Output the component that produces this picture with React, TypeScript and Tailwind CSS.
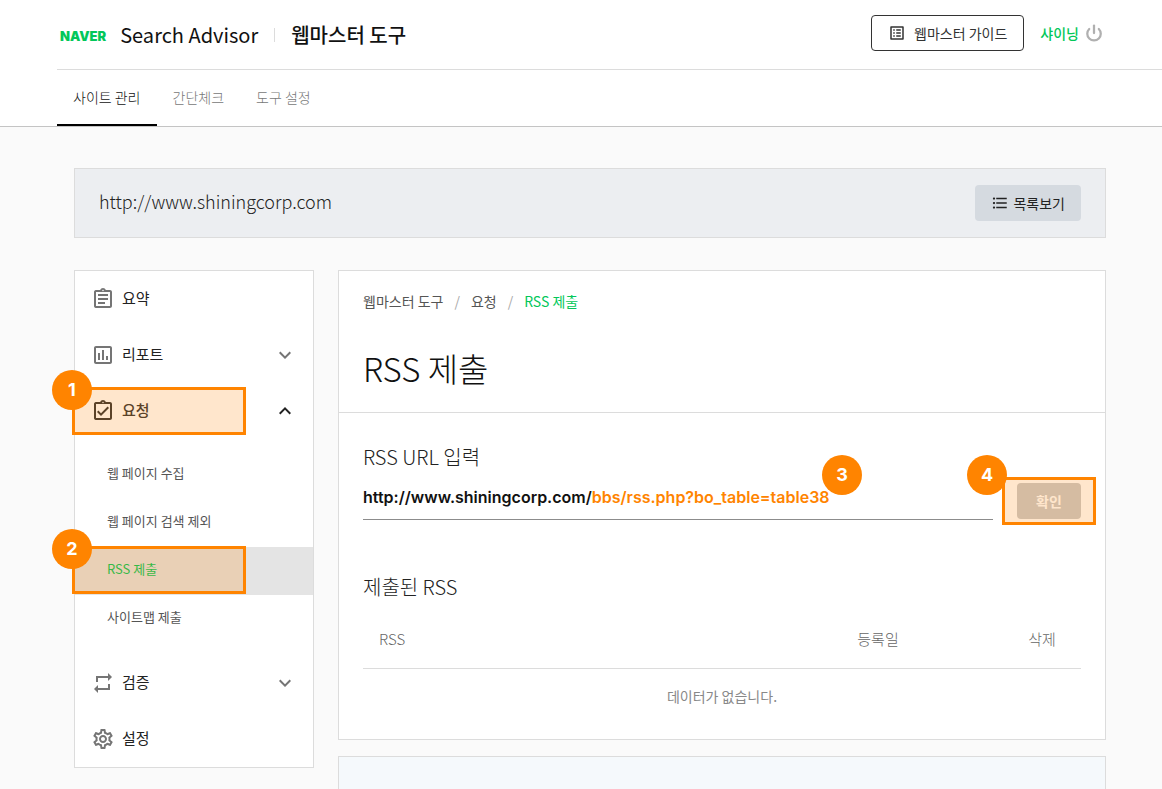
import { useState } from "react";
import { Power } from "lucide-react";
import type { IconType } from "react-icons";
import {
  MdExpandLess,
  MdExpandMore,
  MdFormatListBulleted,
  MdOutlineAssessment,
  MdOutlineAssignment,
  MdOutlineAssignmentTurnedIn,
  MdOutlineListAlt,
  MdOutlineSettings,
  MdRepeat,
} from "react-icons/md";

const card = "border border-[#dcdcdc] bg-white";

const TABS = ["사이트 관리", "간단체크", "도구 설정"];

type MenuItem = {
  label: string;
  icon: IconType;
  expandable?: boolean;
  step?: number;
  children?: { label: string; step?: number }[];
};

const MENU: MenuItem[] = [
  { label: "요약", icon: MdOutlineAssignment },
  { label: "리포트", icon: MdOutlineAssessment, expandable: true },
  {
    label: "요청",
    icon: MdOutlineAssignmentTurnedIn,
    expandable: true,
    step: 1,
    children: [
      { label: "웹 페이지 수집" },
      { label: "웹 페이지 검색 제외" },
      { label: "RSS 제출", step: 2 },
      { label: "사이트맵 제출" },
    ],
  },
  { label: "검증", icon: MdRepeat, expandable: true },
  { label: "설정", icon: MdOutlineSettings },
];

const StepBadge = ({ step, className }: { step: number; className: string }) => (
  <span
    className={
      "pointer-events-none absolute z-10 flex size-10 items-center justify-center rounded-full bg-[#ff8400] font-[Inter,sans-serif] text-lg font-bold text-white " +
      className
    }
  >
    {step}
  </span>
);

// orange frame laid over the control a step points at
const StepFrame = ({ className }: { className: string }) => (
  <span
    className={
      "pointer-events-none absolute h-12 border-3 border-[#ff8400] bg-[#ff8400]/20 " +
      className
    }
  />
);

const Header = () => (
  <header className="border-b border-[#c4c4c4] bg-white pl-[57px]">
    <div className="flex h-[70px] items-center justify-between border-b border-[#dcdcdc] pr-[59px]">
      <div className="flex items-center pl-[3px] text-xl font-medium text-[#111]">
        <span className="mt-1 font-[Inter,sans-serif] text-[13px] font-black text-[#03c75a]">
          NAVER
        </span>
        <a href="#" className="ml-3.5 font-normal">
          Search Advisor
        </a>
        <span className="mx-4 h-3.5 w-px bg-[#dcdcdc]" />
        <a href="#">웹마스터 도구</a>
      </div>
      <div className="mb-1 flex items-center">
        <a
          href="#"
          className="flex h-9 items-center gap-2 rounded border border-[#333] px-4 text-sm text-[#333]"
        >
          <MdOutlineListAlt className="size-[18px]" />
          웹마스터 가이드
        </a>
        <span className="ml-4 text-sm font-medium text-[#03c75a]">샤이닝</span>
        <button type="button" aria-label="로그아웃" className="ml-1.5">
          <Power className="size-[18px] text-[#b0b0b0]" strokeWidth={3} />
        </button>
      </div>
    </div>
    <nav className="flex h-14">
      {TABS.map((tab, i) => (
        <a
          key={tab}
          href="#"
          className={
            "flex items-center border-b-2 px-4 text-sm font-light " +
            (i === 0
              ? "border-black text-[#111]"
              : "border-transparent text-[#777]")
          }
        >
          {tab}
        </a>
      ))}
    </nav>
  </header>
);

const Sidebar = () => (
  <aside className={card + " w-60 shrink-0 self-start"}>
    <ul>
      {MENU.map(({ label, icon: Icon, expandable, step, children }) => (
        <li key={label}>
          <div className="relative">
            <button
              type="button"
              className={
                "flex h-14 w-full items-center px-4 text-[15px] " +
                (children ? "font-medium text-[#333]" : "text-[#222]")
              }
            >
              <Icon
                className={
                  "mr-[7px] size-6 " +
                  (children ? "text-[#333]" : "text-[#757575]")
                }
              />
              <span className="pb-0.5">{label}</span>
              {expandable &&
                (children ? (
                  <MdExpandLess className="ml-auto size-6 text-[#222]" />
                ) : (
                  <MdExpandMore className="ml-auto size-6 text-[#757575]" />
                ))}
            </button>
            {step && (
              <>
                <StepFrame className="top-1 -left-[3px] w-[174px]" />
                <StepBadge step={step} className="-top-[13px] -left-[23px]" />
              </>
            )}
          </div>
          {children && (
            <ul className="py-3">
              {children.map((child) => (
                <li key={child.label} className="relative">
                  <a
                    href="#"
                    className={
                      "flex h-12 items-center pb-1 pl-8 text-[13px] " +
                      (child.step
                        ? "bg-[#e4e4e4] text-[#03c75a]"
                        : "text-[#555]")
                    }
                  >
                    {child.label}
                  </a>
                  {child.step && (
                    <>
                      <StepFrame className="-top-px -left-[3px] w-[174px]" />
                      <StepBadge
                        step={child.step}
                        className="-top-[18px] -left-[23px]"
                      />
                    </>
                  )}
                </li>
              ))}
            </ul>
          )}
        </li>
      ))}
    </ul>
  </aside>
);

const RssPanel = () => {
  const [path, setPath] = useState("bbs/rss.php?bo_table=table38");

  return (
    <section className={card}>
      <div className="border-b border-[#dcdcdc] px-6 pt-[18px] pb-6">
        <nav className="flex h-6 items-center gap-[11px] text-sm text-[#555]">
          <a href="#">웹마스터 도구</a>
          <span className="text-[#aaa]">/</span>
          <a href="#">요청</a>
          <span className="text-[#aaa]">/</span>
          <a href="#" className="text-[#03c75a]">
            RSS 제출
          </a>
        </nav>
        <h1 className="mt-[35px] text-[33px] leading-10 font-light text-[#111]">
          RSS 제출
        </h1>
      </div>

      <div className="px-6 pt-7 pb-4">
        <label
          htmlFor="rss-path"
          className="block text-xl leading-8 font-light text-[#222]"
        >
          RSS URL 입력
        </label>
        <form
          className="flex items-start gap-6"
          onSubmit={(e) => e.preventDefault()}
        >
          <div className="relative flex h-[47px] flex-1 items-center border-b border-[#8c8c8c] pt-0.5 font-[Inter,sans-serif] text-base font-semibold">
            <span className="text-[#111]">http://www.shiningcorp.com/</span>
            <input
              id="rss-path"
              value={path}
              onChange={(e) => setPath(e.target.value)}
              className="min-w-0 flex-1 text-[#ff8400] outline-none"
            />
            <StepBadge step={3} className="-top-[18px] right-[131px]" />
          </div>
          <div className="relative mt-2.5">
            <button
              type="submit"
              className="h-9 w-16 rounded bg-[#cbcbcb] text-sm font-bold text-white"
            >
              확인
            </button>
            <StepFrame className="-top-1.5 -left-[15px] w-[94px]" />
            <StepBadge step={4} className="-top-7 -left-[50px]" />
          </div>
        </form>

        <h2 className="mt-[51px] text-xl leading-8 font-light text-[#222]">
          제출된 RSS
        </h2>
        <table className="mt-2 w-full table-fixed text-[15px]">
          <thead className="border-b border-[#dcdcdc] text-[#666]">
            <tr className="h-[57px]">
              <th className="px-4 text-left font-light">RSS</th>
              <th className="w-[250px] px-4 text-center font-light">등록일</th>
              <th className="w-[78px] px-4 text-center font-light whitespace-nowrap">
                삭제
              </th>
            </tr>
          </thead>
          <tbody>
            <tr className="h-[55px]">
              <td colSpan={3} className="text-center text-sm text-[#888]">
                데이터가 없습니다.
              </td>
            </tr>
          </tbody>
        </table>
      </div>
    </section>
  );
};

const App = () => (
  <div className="flex min-h-screen flex-col bg-[#fafafa] font-['Noto_Sans_CJK_KR',sans-serif]">
    <Header />
    <div className="flex flex-1 flex-col gap-8 pt-[41px] pr-14 pl-[74px]">
      <div className="flex h-[70px] items-center justify-between border border-[#dcdcdc] bg-[#eceef1] px-6">
        <span className="pb-1 text-lg font-light text-[#222]">
          http://www.shiningcorp.com
        </span>
        <button
          type="button"
          className="flex h-9 items-center gap-1 rounded bg-[#d5dae0] px-4 text-sm text-[#222]"
        >
          <MdFormatListBulleted className="size-[18px]" />
          목록보기
        </button>
      </div>
      <div className="flex flex-1 gap-6">
        <Sidebar />
        <main className="flex min-w-0 flex-1 flex-col gap-4">
          <RssPanel />
          <section className="flex-1 border border-b-0 border-[#dcdcdc] bg-[#f5f9fc]" />
        </main>
      </div>
    </div>
  </div>
);

export default App;
